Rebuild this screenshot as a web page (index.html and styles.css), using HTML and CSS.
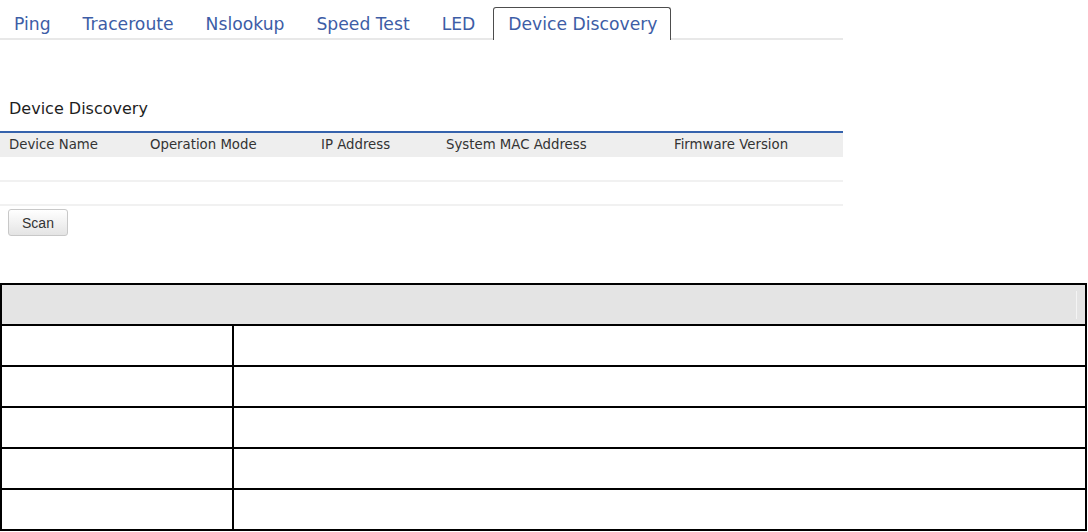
FILE: index.html
```html
<!DOCTYPE html>
<html>
<head>
<meta charset="utf-8">
<link rel="stylesheet" href="styles.css">
</head>
<body>
<div class="top">
  <ul class="tabs">
    <li class="tab">Ping</li>
    <li class="tab">Traceroute</li>
    <li class="tab">Nslookup</li>
    <li class="tab">Speed Test</li>
    <li class="tab">LED</li>
    <li class="tab active">Device Discovery</li>
  </ul>
  <h2 class="title">Device Discovery</h2>
  <div class="grid">
    <div class="grid-head">
      <div>Device Name</div>
      <div>Operation Mode</div>
      <div>IP Address</div>
      <div>System MAC Address</div>
      <div>Firmware Version</div>
    </div>
    <div class="grid-row"></div>
    <div class="grid-row"></div>
  </div>
  <button class="btn">Scan</button>
</div>
<div class="info">
  <div class="info-head"><div class="info-head-inner"></div></div>
  <div class="info-row"><div class="label"></div><div class="value"></div></div>
  <div class="info-row"><div class="label"></div><div class="value"></div></div>
  <div class="info-row"><div class="label"></div><div class="value"></div></div>
  <div class="info-row"><div class="label"></div><div class="value"></div></div>
  <div class="info-row"><div class="label"></div><div class="value"></div></div>
</div>
</body>
</html>
```
FILE: styles.css
```css
html, body {
  margin: 0;
  padding: 0;
  background: #fff;
}
body {
  font-family: "DejaVu Sans", Verdana, sans-serif;
  color: #222;
}
.top {
  width: 843px;
}
.tabs {
  list-style: none;
  margin: 7px 0 0 0;
  padding: 0;
  display: flex;
  border-bottom: 2px solid #e8e8e8;
  height: 31px;
}
.tab {
  font-size: 17.2px;
  line-height: 27px;
  height: 27px;
  padding: 3px 13px 0 13px;
  margin-right: 4px;
  border: 1px solid transparent;
  border-bottom: 0;
  color: #3d5da6;
  white-space: nowrap;
}
.tab.active {
  border-color: #4d4d4d;
  border-radius: 3px 3px 0 0;
  background: #fff;
  height: 29px;
  padding: 3px 13px 0 14px;
  margin-left: 0;
}
.title {
  margin: 59px 0 0 9px;
  font-size: 16px;
  font-weight: normal;
  line-height: 20px;
  color: #1e1e1e;
}
.grid {
  margin-top: 12px;
  border-top: 2px solid #3562ac;
}
.grid-head {
  display: grid;
  grid-template-columns: 141px 171px 125px 228px 1fr;
  height: 24px;
  background: #eeeeee;
  font-size: 13.3px;
  line-height: 24px;
  color: #333;
}
.grid-head > div {
  padding-left: 9px;
}
.grid-row {
  height: 23px;
  border-bottom: 2px solid #f1f1f1;
}
.grid-row + .grid-row {
  height: 22px;
}
.btn {
  display: block;
  margin: 3px 0 0 8px;
  width: 60px;
  height: 27px;
  padding: 0;
  border: 1px solid #c8c8c8;
  border-radius: 3px;
  background: linear-gradient(#ffffff, #e4e4e4);
  font-family: "Liberation Sans", Arial, sans-serif;
  font-size: 14px;
  color: #333;
}
.info {
  margin-top: 47px;
  width: 1087px;
  box-sizing: border-box;
  border: 2px solid #000;
}
.info-head {
  height: 39px;
  background: #e4e4e4;
  box-sizing: border-box;
  padding: 6px 8px 5px 6px;
}
.info-head-inner {
  height: 100%;
  border-right: 1px solid #f4f4f4;
}
.info-row {
  display: grid;
  grid-template-columns: 232px 1fr;
  height: 41px;
  box-sizing: border-box;
  border-top: 2px solid #000;
}
.info-row .label {
  border-right: 2px solid #000;
}
```
